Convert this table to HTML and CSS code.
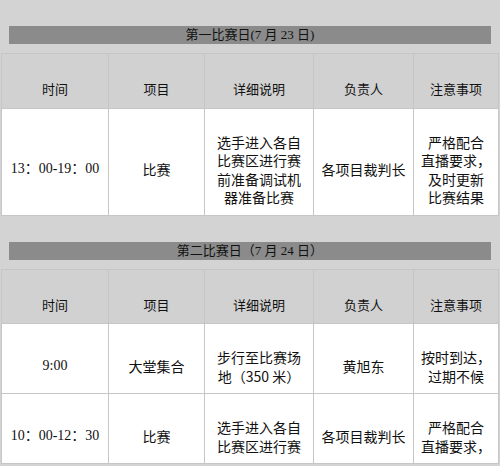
FILE: index.html
```html
<!DOCTYPE html>
<html lang="zh-CN">
<head>
<meta charset="utf-8">
<title>比赛日程</title>
<link rel="stylesheet" href="styles.css">
</head>
<body>
<section class="day">
  <div class="bar">第一比赛日(7 月 23 日)</div>
  <table class="sched">
    <colgroup>
      <col class="c1"><col class="c2"><col class="c3"><col class="c4"><col class="c5">
    </colgroup>
    <thead>
      <tr><th>时间</th><th>项目</th><th>详细说明</th><th>负责人</th><th>注意事项</th></tr>
    </thead>
    <tbody>
      <tr>
        <td class="num">13：00-19：00</td>
        <td>比赛</td>
        <td><span class="ln">选手进入各自</span><span class="ln">比赛区进行赛</span><span class="ln">前准备调试机</span><span class="ln">器准备比赛</span></td>
        <td>各项目裁判长</td>
        <td><span class="ln">严格配合</span><span class="ln">直播要求，</span><span class="ln">及时更新</span><span class="ln">比赛结果</span></td>
      </tr>
    </tbody>
  </table>
</section>
<section class="day">
  <div class="bar">第二比赛日（7 月 24 日）</div>
  <table class="sched">
    <colgroup>
      <col class="c1"><col class="c2"><col class="c3"><col class="c4"><col class="c5">
    </colgroup>
    <thead>
      <tr><th>时间</th><th>项目</th><th>详细说明</th><th>负责人</th><th>注意事项</th></tr>
    </thead>
    <tbody>
      <tr>
        <td class="num">9:00</td>
        <td>大堂集合</td>
        <td><span class="ln">步行至比赛场</span><span class="ln">地（350 米）</span></td>
        <td>黄旭东</td>
        <td><span class="ln">按时到达，</span><span class="ln">过期不候</span></td>
      </tr>
      <tr>
        <td class="num">10：00-12：30</td>
        <td>比赛</td>
        <td><span class="ln">选手进入各自</span><span class="ln">比赛区进行赛</span></td>
        <td>各项目裁判长</td>
        <td><span class="ln">严格配合</span><span class="ln">直播要求，</span></td>
      </tr>
    </tbody>
  </table>
</section>
</body>
</html>
```

FILE: styles.css
```css
html, body {
  margin: 0;
  padding: 0;
}

body {
  width: 500px;
  height: 466px;
  overflow: hidden;
  background: #d3d3d3;
  color: #111111;
  font-family: "Noto Sans CJK SC", "Noto Sans", sans-serif;
  font-size: 14px;
}

.day {
  padding-top: 26px;
}

.bar {
  margin: 0 9px;
  height: 18px;
  line-height: 18px;
  background: #8b8b8b;
  text-align: center;
  font-family: "Liberation Serif", "Noto Sans CJK SC", serif;
  font-size: 13px;
  color: #111111;
}

.sched {
  margin: 9px 0 0 1px;
  width: 497px;
  border-collapse: collapse;
  table-layout: fixed;
}

.c1 { width: 107px; }
.c2 { width: 96px; }
.c3 { width: 109px; }
.c4 { width: 100px; }
.c5 { width: 85px; }

.sched th,
.sched td {
  border: 1px solid #c6c6c6;
  line-height: 18.5px;
  text-align: center;
  vertical-align: middle;
  white-space: nowrap;
}

.sched td {
  padding: 24px 4px 8px;
  background: #ffffff;
}

.sched th {
  padding: 26px 4px 9px;
  background: #d1d1d1;
  font-weight: normal;
  font-size: 13px;
  color: #111111;
}

.sched td.num {
  font-family: "Liberation Serif", "Noto Sans CJK SC", serif;
  font-size: 14px;
}

.ln {
  display: block;
  height: 18.5px;
  line-height: 18.5px;
}
```
